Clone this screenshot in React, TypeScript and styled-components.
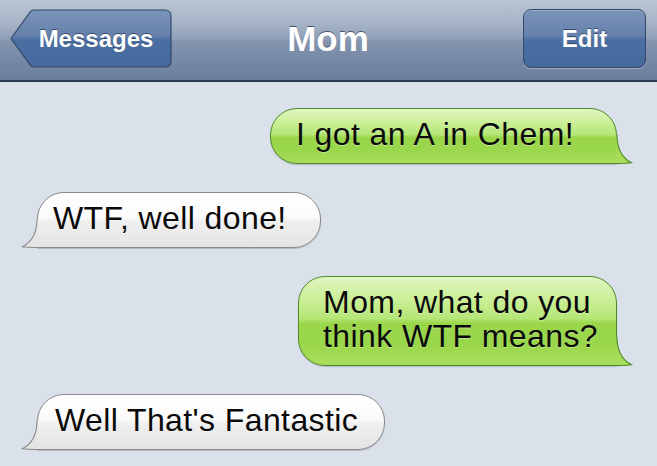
import React from 'react';
import styled, { createGlobalStyle } from 'styled-components';

const Global = createGlobalStyle`
  html, body { margin: 0; padding: 0; background: #dbe1ea; }
  body { width: 657px; height: 466px; overflow: hidden; font-family: "Liberation Sans", Arial, Helvetica, sans-serif; }
`;

const Screen = styled.div`
  width: 657px;
  height: 466px;
  display: flex;
  flex-direction: column;
  background: #dbe1ea;
  overflow: hidden;
`;

const NavBar = styled.header`
  box-sizing: border-box;
  height: 82px;
  flex: 0 0 82px;
  display: grid;
  grid-template-columns: 1fr auto 1fr;
  align-items: start;
  padding: 9px 11px 0 10px;
  border-bottom: 2px solid #2a3a50;
  background: linear-gradient(
    180deg,
    #bac5d4 0%,
    #a6b3c6 30%,
    #8f9fb7 49%,
    #8495ae 51%,
    #7387a4 80%,
    #6c809e 100%
  );
`;

const Title = styled.h1`
  margin: 0;
  justify-self: center;
  font-size: 35px;
  line-height: 59px;
  font-weight: bold;
  color: #ffffff;
  text-shadow: 0 -1px 0 rgba(40, 55, 80, 0.75);
`;

const NavButton = styled.button<{ $back?: boolean }>`
  position: relative;
  box-sizing: border-box;
  height: 59px;
  width: ${p => (p.$back ? '162px' : '123px')};
  justify-self: ${p => (p.$back ? 'start' : 'end')};
  padding: ${p => (p.$back ? '0 18px 0 28px' : '0')};
  border: ${p => (p.$back ? 'none' : '1px solid #34496a')};
  border-radius: ${p => (p.$back ? '0' : '8px')};
  background: ${p =>
    p.$back
      ? 'transparent'
      : 'linear-gradient(180deg, #7b94ba 0%, #6581ab 45%, #4b6fa2 52%, #46699c 100%)'};
  box-shadow: ${p =>
    p.$back ? 'none' : 'inset 0 1px 0 rgba(255,255,255,0.25), 0 1px 0 rgba(255,255,255,0.3)'};
  font-family: inherit;
  font-size: 24px;
  font-weight: bold;
  line-height: 57px;
  color: #ffffff;
  text-shadow: 0 -1px 0 rgba(20, 35, 60, 0.6);
  text-align: center;
  cursor: pointer;
`;

const ButtonShape = styled.svg`
  position: absolute;
  left: 0;
  top: 0;
  width: 162px;
  height: 59px;
  z-index: 0;
`;

const ButtonLabel = styled.span`
  position: relative;
  z-index: 1;
`;

const Thread = styled.main`
  display: flex;
  flex-direction: column;
  gap: 28px;
  padding: 26px 40px 0 37px;
`;

const Row = styled.div<{ $me: boolean }>`
  display: flex;
  justify-content: ${p => (p.$me ? 'flex-end' : 'flex-start')};
`;

const Bubble = styled.div<{ $me: boolean; $padL: number; $padR: number }>`
  position: relative;
  box-sizing: border-box;
  white-space: pre-line;
  padding: 8px ${p => p.$padR}px 12px ${p => p.$padL}px;
  border: 1px solid ${p => (p.$me ? '#4d8a2b' : '#8a8a8a')};
  border-radius: ${p => (p.$me ? '27px 27px 0 27px' : '27px 27px 27px 0')};
  background: ${p =>
    p.$me
      ? 'linear-gradient(180deg, #e0f6c0 0%, #cbef97 25%, #b5e677 47%, #9ad64a 53%, #9bd74c 78%, #a9de5c 100%)'
      : 'linear-gradient(180deg, #ffffff 0%, #fbfbfb 44%, #efefef 53%, #e9e9e9 80%, #e4e4e4 100%)'};
  box-shadow: 0 1px 1px rgba(0, 0, 0, 0.18);
  font-size: 32px;
  line-height: 34px;
  letter-spacing: 0.4px;
  color: #0a0a0a;
  text-shadow: 0 1px 0 rgba(255, 255, 255, 0.35);
`;

const Tail = styled.svg<{ $me: boolean }>`
  position: absolute;
  bottom: -1px;
  width: 16px;
  height: 29px;
  overflow: visible;
  ${p => (p.$me ? 'right: -16px;' : 'left: -16px; transform: scaleX(-1);')}
`;

type Msg = { me: boolean; text: string; padL: number; padR: number };

const messages: Msg[] = [
  { me: true, text: 'I got an A in Chem!', padL: 25, padR: 42 },
  { me: false, text: 'WTF, well done!', padL: 15, padR: 33 },
  { me: true, text: 'Mom, what do you\nthink WTF means?', padL: 24, padR: 18 },
  { me: false, text: "Well That's Fantastic", padL: 17, padR: 26 },
];

const TAIL_FILL = 'M0 0 L1 0 C1 12 5.5 22.5 15.5 27.8 C 10 28.8 4 28.2 0 28.2 Z';
const TAIL_LINE = 'M1 0 C1 12 5.5 22.5 15.5 27.8 C 10 28.8 4 28.5 0 28.5';

function BubbleTail({ me, id }: { me: boolean; id: string }) {
  return (
    <Tail $me={me} viewBox="0 0 16 29" aria-hidden="true">
      <defs>
        <linearGradient id={id} x1="0" y1="0" x2="0" y2="1">
          <stop offset="0" stopColor={me ? '#9ad64a' : '#ebebeb'} />
          <stop offset="1" stopColor={me ? '#aade5d' : '#e3e3e3'} />
        </linearGradient>
      </defs>
      <path d={TAIL_FILL} fill={`url(#${id})`} />
      <path d={TAIL_LINE} fill="none" stroke={me ? '#4d8a2b' : '#8a8a8a'} strokeWidth="1.1" />
    </Tail>
  );
}

export default function App() {
  return (
    <Screen>
      <Global />
      <NavBar>
        <NavButton $back>
          <ButtonShape viewBox="0 0 162 59" aria-hidden="true">
            <defs>
              <linearGradient id="backGrad" x1="0" y1="0" x2="0" y2="1">
                <stop offset="0" stopColor="#7b94ba" />
                <stop offset="0.45" stopColor="#6581ab" />
                <stop offset="0.52" stopColor="#4b6fa2" />
                <stop offset="1" stopColor="#46699c" />
              </linearGradient>
            </defs>
            <path
              d="M1 29.5 L20 3.2 Q21.5 1 24 1 L155 1 Q161 1 161 7 L161 52 Q161 58 155 58 L24 58 Q21.5 58 20 55.8 Z"
              fill="url(#backGrad)"
              stroke="#34496a"
              strokeWidth="1.2"
            />
          </ButtonShape>
          <ButtonLabel>Messages</ButtonLabel>
        </NavButton>
        <Title>Mom</Title>
        <NavButton>Edit</NavButton>
      </NavBar>
      <Thread>
        {messages.map((m, i) => (
          <Row key={i} $me={m.me}>
            <Bubble $me={m.me} $padL={m.padL} $padR={m.padR}>
              {m.text}
              <BubbleTail me={m.me} id={`tail${i}`} />
            </Bubble>
          </Row>
        ))}
      </Thread>
    </Screen>
  );
}
